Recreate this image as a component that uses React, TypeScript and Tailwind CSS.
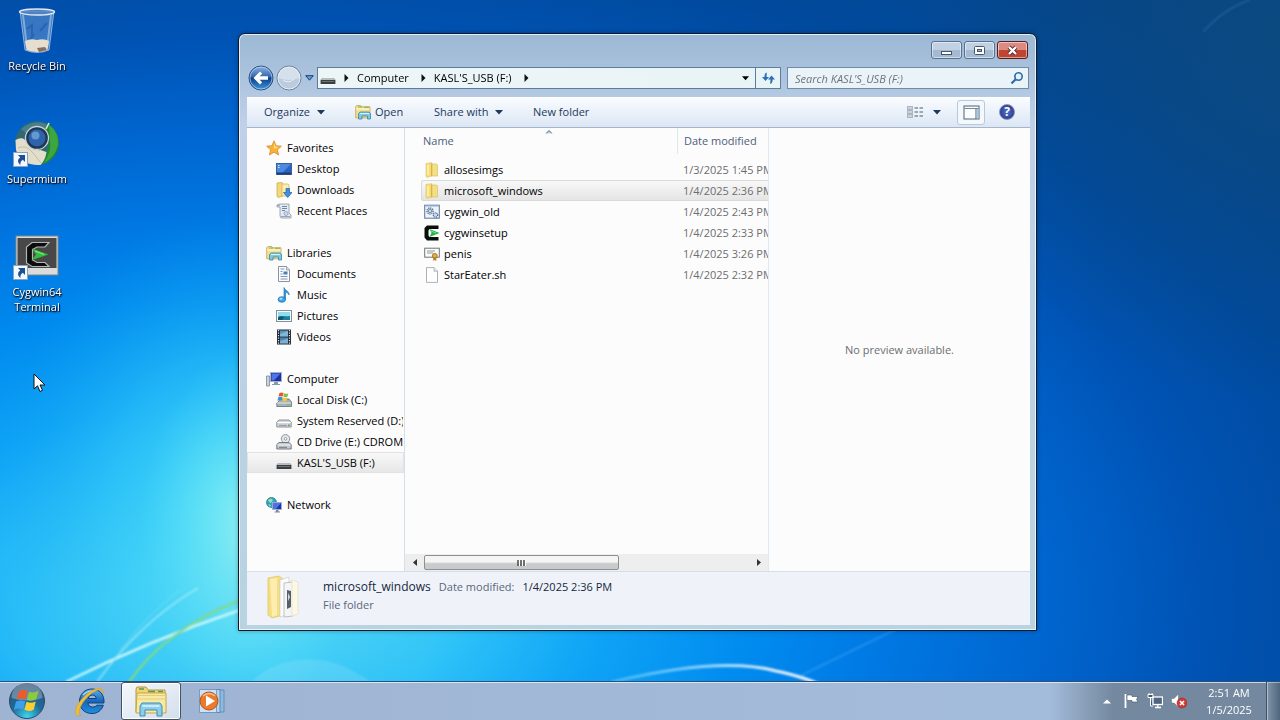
import type { ReactNode } from 'react';

function Svg({ size = 16, className = '', children }: { size?: number; className?: string; children: ReactNode }) {
  return (
    <svg width={size} height={size} viewBox={`0 0 ${size} ${size}`} className={`shrink-0 ${className}`} aria-hidden="true">
      {children}
    </svg>
  );
}

/* ---------- small icons ---------- */

const StarIcon = () => (
  <Svg>
    <path d="M8 .8l2.100 4.900 5.300.5-4 3.600 1.200 5.200L8 12.200 3.400 15l1.200-5.200-4-3.600 5.300-.5z" fill="#f9b233" stroke="#d98a2c" strokeWidth=".8" />
    <path d="M8 3l1.200 3.500 3.400.4L8 9z" fill="#fde08a" />
  </Svg>
);
const DesktopIcon = () => (
  <Svg>
    <rect x=".5" y="2.500" width="15" height="11" fill="#2b62c0" stroke="#3a5f96" />
    <path d="M1 3h14L6 12H1z" fill="#4a8ae0" />
    <path d="M1 11.500h14v2H1z" fill="#1c3a78" />
    <path d="M2 4.500h1.500M2 6.500h1.500" stroke="#cfe4ff" />
  </Svg>
);
const DownloadsIcon = () => (
  <Svg>
    <path d="M1 1l5-.5 1 1.500V14l-5 1.500L1 14z" fill="#f3d878" stroke="#c9a542" strokeWidth=".7" />
    <path d="M6 2h6l1 1v11H6z" fill="#fbeeb0" stroke="#cfae50" strokeWidth=".7" />
    <path d="M10 6.500h3.500v4H16L11.700 15.500 7.500 10.500H10z" fill="#3f8fe0" stroke="#1e5fae" strokeWidth=".7" />
  </Svg>
);
const RecentIcon = () => (
  <Svg>
    <path d="M3 1h10v9l2 2v3H5l-1-2V4H1V2z" fill="#e6eaf0" stroke="#8a94a3" strokeWidth=".8" />
    <path d="M6 3.500h5M6 5.500h5M6 7.500h3" stroke="#6d86ac" />
    <path d="M1 2.500h3M5 13.500h9" stroke="#9aa5b5" />
    <circle cx="10" cy="10.500" r="2" fill="#cddcee" stroke="#7f93b0" strokeWidth=".7" />
  </Svg>
);
const LibraryIcon = () => (
  <Svg>
    <path d="M.7 2.500l1-1h4l1 1.300H15v11H.7z" fill="#f4df8d" stroke="#c5a44c" strokeWidth=".8" />
    <path d="M1.200 5h13.300" stroke="#fdf6cc" strokeWidth="1.400" />
    <path d="M3 3h4M9 3.200h5" stroke="#7db05a" />
    <path d="M3.500 15V9.500l1.500-1.500h9l1.500 1.500V15h-3v-3H7v3z" fill="#7fc9e0" stroke="#3b87a8" strokeWidth=".8" />
    <path d="M5 9.500h9" stroke="#d4f3fa" />
  </Svg>
);
const DocumentIcon = () => (
  <Svg>
    <path d="M2.500.5h8L13.500 4v11.500h-11z" fill="#fafcff" stroke="#7d8794" strokeWidth=".9" />
    <path d="M10.500.5V4h3" fill="#d7dee8" stroke="#7d8794" strokeWidth=".7" />
    <path d="M4.500 3h4M4.500 5.500h2M4.500 8h2M4.500 10.500h7M4.500 13h7" stroke="#7e94b5" />
    <rect x="7.500" y="5.500" width="4" height="3" fill="#4a7fae" />
  </Svg>
);
const MusicIcon = () => (
  <Svg>
    <path d="M8 .5c1 3 5.500 3.500 5 7.500-.3-1.500-1.500-2.500-3.500-3v7.500H8z" fill="#2f9be0" stroke="#1b6cab" strokeWidth=".6" />
    <ellipse cx="5.800" cy="12.500" rx="3.700" ry="2.800" fill="#3aa6e8" stroke="#1b6cab" strokeWidth=".7" />
    <ellipse cx="5" cy="11.800" rx="1.500" ry="1" fill="#b6e2fa" />
  </Svg>
);
const PictureIcon = () => (
  <Svg>
    <rect x=".5" y="2.500" width="15" height="11" fill="#fff" stroke="#80919d" />
    <rect x="2" y="4" width="12" height="8" fill="#8fdcea" />
    <path d="M2 9c3-2 6 0 12-1v4H2z" fill="#1d7f9c" />
    <path d="M2 9.500c2-1.500 4-1 6 0l-2 2.500H2z" fill="#14566f" />
  </Svg>
);
const VideoIcon = () => (
  <Svg>
    <rect x="1" y=".5" width="14" height="15" fill="#1e2935" />
    <rect x="4" y="1.500" width="8" height="6" fill="#5a93bd" />
    <rect x="4" y="8.500" width="8" height="6" fill="#4c86b0" />
    <path d="M4 5l8-3v5.500H4zM4 12l8-2.500v5H4z" fill="#9fcbe4" opacity=".6" />
    <path d="M2.500 1v14M13.500 1v14" stroke="#dde6ec" strokeWidth="1.200" strokeDasharray="1.300 1.200" />
  </Svg>
);
const ComputerIcon = () => (
  <Svg>
    <path d="M.5 5h3v10h-3z" fill="#c9d3de" stroke="#7b8795" strokeWidth=".8" />
    <rect x="4.500" y="1.500" width="11" height="9" fill="#1c2fb0" stroke="#a6b3c4" />
    <path d="M5.500 2.500h9L8 9.500H5.500z" fill="#4f74e4" />
    <path d="M8 11h4v2h2v1H6v-1h2z" fill="#8b98a8" />
  </Svg>
);
const LocalDiskIcon = () => (
  <Svg>
    <path d="M3 9l1-2h9l2.500 3v4.500H.8V11z" fill="#a8b0b8" stroke="#636c76" strokeWidth=".8" />
    <path d="M1 11h14" stroke="#e3e8ec" />
    <rect x="11" y="12" width="3" height="1.200" fill="#5ed04c" />
    <path d="M3.500 1c1.500-1 3-.6 4 0L6.800 4.500C5.500 4 4.100 4 2.500 4.600z" fill="#e8552a" />
    <path d="M8 1.300c1.500.8 2.700.7 4.300 0l-.9 3.500c-1.200.6-2.700.6-4 0z" fill="#7cc142" />
    <path d="M2.300 5.200c1.300-.7 2.800-.6 4.200 0L5.600 8.700c-1.300-.6-2.700-.6-4.200 0z" fill="#3d8fe0" />
    <path d="M7.100 5.500c1.400.6 2.700.6 4.100 0l-.8 3.500c-1.200.6-2.800.6-4.100 0z" fill="#f8c62d" />
  </Svg>
);
const DriveIcon = () => (
  <Svg>
    <path d="M.8 9L3 7h10l2.200 2v5H.8z" fill="#d4d7da" stroke="#85898e" strokeWidth=".9" />
    <path d="M1.500 9.500h13" stroke="#fff" />
    <path d="M3 12.300h8" stroke="#8e9499" />
    <rect x="12.200" y="11.500" width="1.500" height="1.500" fill="#4b9f42" />
  </Svg>
);
const CdDriveIcon = () => (
  <Svg>
    <circle cx="9.500" cy="4.800" r="4.200" fill="#e5e9ec" stroke="#82888e" strokeWidth=".9" />
    <circle cx="9.500" cy="4.800" r="1.300" fill="#fff" stroke="#777e85" strokeWidth=".7" />
    <path d="M.8 10.500L3 8.500h10l2.200 2V15H.8z" fill="#c4c9ce" stroke="#6b7279" strokeWidth=".9" />
    <path d="M1.500 11h13" stroke="#f4f6f7" />
    <path d="M3 13.300h8" stroke="#737b82" />
  </Svg>
);
const UsbIcon = () => (
  <Svg>
    <path d="M.6 10L2.500 8h11l1.900 2v4H.6z" fill="#3c3f42" />
    <path d="M.6 10L2.500 8h11l1.900 2z" fill="#b9bdc1" />
    <path d="M2 11.500h12" stroke="#6e7276" />
  </Svg>
);
const NetworkIcon = () => (
  <Svg>
    <circle cx="5.500" cy="5.500" r="5" fill="#2fa1c8" stroke="#1c6f96" strokeWidth=".7" />
    <path d="M2 3c2-2 4-1 5 0L5 6 3 5zM2 7l3 1-1 2z" fill="#9be0a0" />
    <rect x="6.500" y="5.500" width="9" height="7" fill="#1b32b4" stroke="#a3b1c5" strokeWidth=".9" />
    <path d="M7 6h8l-5 6H7z" fill="#4c72e4" />
    <path d="M10 13h2.500v1.500H14v1H8.500v-1H10z" fill="#7c8998" />
  </Svg>
);
const FolderIcon = () => (
  <Svg>
    <path d="M2 1.500L8 .7v13L3 15.500 2 14.500z" fill="#f5dc74" stroke="#dcbf5c" strokeWidth=".6" />
    <path d="M8 2h4.500l1 1v11L8 14z" fill="#f4df85" stroke="#d7b95a" strokeWidth=".6" />
    <path d="M7.500 1.500v13" stroke="#d2ad42" strokeWidth=".8" />
    <path d="M4 3v10" stroke="#fdf3b8" strokeWidth="1.500" />
  </Svg>
);
const BatchIcon = () => (
  <Svg>
    <rect x=".7" y="1.200" width="14.600" height="13" fill="#eef3f9" stroke="#5d779c" />
    <path d="M1 2h14" stroke="#8db0dc" />
    <circle cx="6" cy="7" r="3" fill="none" stroke="#5a7390" strokeWidth="1.500" strokeDasharray="1.200 .8" />
    <circle cx="6" cy="7" r="1.700" fill="#c9dcee" stroke="#56708c" strokeWidth=".7" />
    <circle cx="11.500" cy="11" r="2.200" fill="#c9dcee" stroke="#48648a" strokeWidth="1.300" strokeDasharray="1 .7" />
  </Svg>
);
const CygwinIcon = () => (
  <Svg>
    <path d="M14.500.5H3L.5 3v9.500L3 15.500h11.500V12H5.500l-1-1.500v-5L5.500 4h9z" fill="#0b0f0c" />
    <path d="M5.500 4l10 4-10 4L7.500 8z" fill="#27b04a" />
    <path d="M7 6l5 2" stroke="#9df0a9" strokeWidth=".7" />
  </Svg>
);
const CertificateIcon = () => (
  <Svg>
    <rect x=".7" y="2.200" width="14.600" height="9" fill="#fdfdf8" stroke="#6f737b" />
    <path d="M3 5h8M3 7h6" stroke="#8c97ad" />
    <circle cx="10.800" cy="9.800" r="2.400" fill="#e2b13b" stroke="#8f651b" strokeWidth=".8" />
    <path d="M9.300 11.500V15l1.500-1 1.500 1v-3.500z" fill="#b97f22" />
  </Svg>
);
const BlankFileIcon = () => (
  <Svg>
    <path d="M2.500.6h7.500l3.500 3.600v11.200h-11z" fill="#fff" stroke="#a1a9ae" strokeWidth=".9" />
    <path d="M10 .6v3.600h3.500" fill="#e8eded" stroke="#a1a9ae" strokeWidth=".8" />
  </Svg>
);
const Caret = ({ className = '' }: { className?: string }) => (
  <svg width="8" height="5" viewBox="0 0 8 5" className={`shrink-0 ${className}`} aria-hidden="true">
    <path d="M0 0h8L4 4.500z" fill="currentColor" />
  </svg>
);
const Chevron = () => (
  <svg width="5" height="8" viewBox="0 0 5 8" className="shrink-0" aria-hidden="true">
    <path d="M.5 0L4.500 4 .5 8z" fill="#111" />
  </svg>
);

/* ---------- wallpaper ---------- */

function Wallpaper() {
  return (
    <svg className="absolute inset-0 h-full w-full" viewBox="0 0 1280 720" preserveAspectRatio="none" aria-hidden="true">
      <defs>
        <radialGradient id="sky" gradientUnits="userSpaceOnUse" cx="0" cy="0" r="1" gradientTransform="translate(250 600) scale(1400 827)">
          <stop offset="0" stopColor="#74e2f0" />
          <stop offset=".08" stopColor="#50d8f6" />
          <stop offset=".16" stopColor="#2bc0f8" />
          <stop offset=".25" stopColor="#0fa4f6" />
          <stop offset=".36" stopColor="#008bef" />
          <stop offset=".46" stopColor="#0077e2" />
          <stop offset=".57" stopColor="#0065cf" />
          <stop offset=".68" stopColor="#0053b4" />
          <stop offset=".8" stopColor="#004a9e" />
          <stop offset="1" stopColor="#064688" />
        </radialGradient>
        <radialGradient id="halo" gradientUnits="userSpaceOnUse" cx="0" cy="0" r="1" gradientTransform="translate(230 500) scale(230 290)">
          <stop offset="0" stopColor="#52e0f6" stopOpacity=".85" />
          <stop offset=".5" stopColor="#32c8f8" stopOpacity=".5" />
          <stop offset="1" stopColor="#10a0f0" stopOpacity="0" />
        </radialGradient>
        <radialGradient id="glow" gradientUnits="userSpaceOnUse" cx="0" cy="0" r="1" gradientTransform="translate(250 530) scale(110 180)">
          <stop offset="0" stopColor="#a5f5f0" stopOpacity=".75" />
          <stop offset="1" stopColor="#5be4fa" stopOpacity="0" />
        </radialGradient>
        <radialGradient id="corner" gradientUnits="userSpaceOnUse" cx="1280" cy="40" r="360">
          <stop offset="0" stopColor="#0c4a80" stopOpacity=".85" />
          <stop offset="1" stopColor="#0a4478" stopOpacity="0" />
        </radialGradient>
        <linearGradient id="arc" x1="0" x2="1" y1="0" y2="0">
          <stop offset="0" stopColor="#8fe0ff" stopOpacity=".4" />
          <stop offset=".7" stopColor="#fff" stopOpacity=".85" />
          <stop offset="1" stopColor="#fff" />
        </linearGradient>
        <filter id="soft" x="-20%" y="-20%" width="140%" height="140%">
          <feGaussianBlur stdDeviation="1" />
        </filter>
      </defs>
      <rect width="1280" height="720" fill="url(#sky)" />
      <rect width="1280" height="720" fill="url(#halo)" />
      <rect width="1280" height="720" fill="url(#glow)" />
      <rect width="1280" height="720" fill="url(#corner)" />
      <g fill="none" filter="url(#soft)">
        <path d="M245 690c20-30 70-42 110-18l30 18z" fill="#fff" opacity=".12" />
        <path d="M66 682Q150 640 240 610" stroke="#c9f7fb" strokeWidth="2.500" />
        <path d="M97 682Q140 622 198 588" stroke="#a5ecf7" strokeWidth="1.500" opacity=".8" />
        <path d="M120 650Q150 612 180 590" stroke="#7fe0f5" strokeWidth="1" opacity=".8" />
        <path d="M129 682Q165 630 240 600" stroke="#84d982" strokeWidth="2.200" />
        <path d="M612 682Q720 656 776 671Q810 678 830 690" stroke="url(#arc)" strokeWidth="3" />
        <path d="M800 676L915 620" stroke="#4fb5ff" strokeWidth="2" opacity=".35" />
        <path d="M1203 32Q1225 8 1250 0" stroke="#5c9ccb" strokeWidth="1.500" opacity=".3" />
      </g>
    </svg>
  );
}

/* ---------- desktop ---------- */

const ShortcutBadge = ({ y }: { y: number }) => (
  <g transform={`translate(0 ${y})`}>
    <rect x=".5" y=".5" width="14" height="14" fill="#f4f9ff" stroke="#8aa4be" />
    <path d="M5 3h7v7L9.800 7.800C8 9 7 10.500 7.500 13 4.200 10.500 4.500 7.500 7.200 5.200z" fill="#1d4f94" />
  </g>
);
const RecycleBin = () => (
  <svg width="48" height="48" viewBox="0 0 48 48" aria-hidden="true">
    <path d="M7 4h34l-5 39q-12 5-24 0z" fill="#7ba5da" fillOpacity=".45" stroke="#b9d4f0" strokeOpacity=".7" />
    <path d="M10 8l4 33M38 8l-4 33" stroke="#dcecfb" strokeOpacity=".45" strokeWidth="2" />
    <path d="M14 22l5-4v12M27 24l7-8M17 33l4-6" stroke="#1e56a8" strokeOpacity=".55" strokeWidth="2" fill="none" />
    <path d="M12 34q6-3 12-1 7-2 12 1l-1.500 9q-10 4-21 0z" fill="#e6dfd0" />
    <path d="M24 41l8-1 2 3-8 2z" fill="#86705c" />
    <ellipse cx="24" cy="5" rx="17.500" ry="3" fill="#5b87c0" fillOpacity=".7" stroke="#dde8f4" strokeWidth="1.400" />
  </svg>
);
const Supermium = () => (
  <svg width="48" height="48" viewBox="0 0 48 48" aria-hidden="true">
    <circle cx="24" cy="23" r="22" fill="#2f6874" />
    <path d="M8 9q14-12 29-3l-6 7q-9-7-17 1z" fill="#5f98a4" opacity=".5" />
    <path d="M34 3.500a22 22 0 0 1-6 41q6-7 6-15 5-9-1-18z" fill="#23872d" />
    <path d="M36 5q10 7 9 20-3 12-14 18 8-12 6-22z" fill="#49b84c" opacity=".65" />
    <path d="M2.500 20q8-5 13 4 6 7 12 6l6 2q-1 8-6 13Q8 46 3 30z" fill="#e3ddcc" />
    <path d="M5 28q8-4 15 5t9 11" stroke="#c6bda8" strokeWidth="1" fill="none" />
    <circle cx="24" cy="18" r="11.500" fill="#1f3850" stroke="#c9d2d8" strokeWidth="1.300" />
    <circle cx="24" cy="18" r="8.500" fill="#2e63ac" />
    <circle cx="22.500" cy="15.500" r="4" fill="#77a9de" opacity=".75" />
    <path d="M33 9l3-6" stroke="#e9e7d5" strokeWidth="1.500" />
    <ShortcutBadge y={32} />
  </svg>
);
const CygwinTerminal = () => (
  <svg width="48" height="48" viewBox="0 0 48 48" aria-hidden="true">
    <rect x="3" y="3" width="42" height="39" fill="#d9dcda" stroke="#7e8484" />
    <rect x="4.500" y="5" width="39" height="30" fill="#484848" />
    <path d="M36 9.500H19l-5.500 4.500v16l5.500 3.500h17L32 29.500h-8l-4.500-2.500V16.500L24 14h8z" fill="#0b0c0b" stroke="#b4b6b4" strokeWidth="1.200" />
    <path d="M19 15.500l16.500 6L19 27l4-5.500z" fill="#30be3b" />
    <path d="M22 18l9 3.500" stroke="#8cf08f" strokeWidth="1" />
    <ShortcutBadge y={32} />
  </svg>
);

function DesktopShortcut({ icon, label }: { icon: ReactNode; label: string }) {
  return (
    <button className="flex h-[113px] w-full flex-col items-center text-[11px] leading-[15px] text-white [text-shadow:0_1px_2px_#000,1px_1px_1px_#001a40]">
      {icon}
      <span className="mt-[3px] block w-16">{label}</span>
    </button>
  );
}

/* ---------- explorer window ---------- */

type Item = { label: string; icon: ReactNode; selected?: boolean };
const groups: { title: string; icon: ReactNode; items: Item[] }[] = [
  {
    title: 'Favorites',
    icon: <StarIcon />,
    items: [
      { label: 'Desktop', icon: <DesktopIcon /> },
      { label: 'Downloads', icon: <DownloadsIcon /> },
      { label: 'Recent Places', icon: <RecentIcon /> },
    ],
  },
  {
    title: 'Libraries',
    icon: <LibraryIcon />,
    items: [
      { label: 'Documents', icon: <DocumentIcon /> },
      { label: 'Music', icon: <MusicIcon /> },
      { label: 'Pictures', icon: <PictureIcon /> },
      { label: 'Videos', icon: <VideoIcon /> },
    ],
  },
  {
    title: 'Computer',
    icon: <ComputerIcon />,
    items: [
      { label: 'Local Disk (C:)', icon: <LocalDiskIcon /> },
      { label: 'System Reserved (D:)', icon: <DriveIcon /> },
      { label: 'CD Drive (E:) CDROM', icon: <CdDriveIcon /> },
      { label: "KASL'S_USB (F:)", icon: <UsbIcon />, selected: true },
    ],
  },
  { title: 'Network', icon: <NetworkIcon />, items: [] },
];

const files = [
  { name: 'allosesimgs', date: '1/3/2025 1:45 PM', icon: <FolderIcon /> },
  { name: 'microsoft_windows', date: '1/4/2025 2:36 PM', icon: <FolderIcon />, selected: true },
  { name: 'cygwin_old', date: '1/4/2025 2:43 PM', icon: <BatchIcon /> },
  { name: 'cygwinsetup', date: '1/4/2025 2:33 PM', icon: <CygwinIcon /> },
  { name: 'penis', date: '1/4/2025 3:26 PM', icon: <CertificateIcon /> },
  { name: 'StarEater.sh', date: '1/4/2025 2:32 PM', icon: <BlankFileIcon /> },
];

function TitleBar() {
  const base = 'flex h-[18px] w-[31px] items-center justify-center rounded-[3px] border shadow-[inset_0_0_0_1px_rgba(255,255,255,0.5)]';
  return (
    <header className="flex h-[33px] shrink-0 items-start justify-end gap-0.5 pt-[7px] pr-0.5">
      <button aria-label="Minimize" className={`${base} border-[#5b708f] bg-linear-to-b from-[#c0d1e4] from-50% to-[#a3bad2] to-50%`}>
        <svg width="13" height="11" viewBox="0 0 13 11" className="mt-px" aria-hidden="true"><rect x="1.500" y="6.500" width="10" height="3" fill="#fff" stroke="#475468" /></svg>
      </button>
      <button aria-label="Maximize" className={`${base} border-[#5b708f] bg-linear-to-b from-[#c0d1e4] from-50% to-[#a3bad2] to-50%`}>
        <svg width="13" height="11" viewBox="0 0 13 11" aria-hidden="true"><rect x="1.500" y="1.500" width="10" height="8" rx="1" fill="#fff" stroke="#475468" /><rect x="4.500" y="4.500" width="4" height="2" fill="#9fb6d0" stroke="#475468" /></svg>
      </button>
      <button aria-label="Close" className={`${base} border-[#5c1a1a] bg-linear-to-b from-[#dd8a80] from-50% to-[#bf4533] to-50%`}>
        <svg width="13" height="11" viewBox="0 0 13 11" aria-hidden="true"><path d="M3 2l7 7M10 2L3 9" stroke="#5d2a28" strokeWidth="4" /><path d="M3 2l7 7M10 2L3 9" stroke="#fff" strokeWidth="2.400" /></svg>
      </button>
    </header>
  );
}

function NavBar() {
  return (
    <nav className="flex h-[22px] shrink-0 items-center pr-px" aria-label="Location">
      <button aria-label="Back" className="ml-px size-[26px]">
        <svg width="26" height="26" viewBox="0 0 26 26" aria-hidden="true">
          <defs>
            <linearGradient id="back" x1="0" x2="0" y1="0" y2="1">
              <stop offset="0" stopColor="#8fb5e0" /><stop offset=".45" stopColor="#3468b0" /><stop offset=".5" stopColor="#0d3c88" /><stop offset="1" stopColor="#3f9be0" />
            </linearGradient>
          </defs>
          <circle cx="13" cy="13" r="12" fill="url(#back)" stroke="#2c4e80" />
          <circle cx="13" cy="13" r="11" fill="none" stroke="#cfe2f5" strokeOpacity=".6" />
          <path d="M5.500 13l6.500-6.500 2.200 2.200-2.600 2.600H20v3.400h-8.400l2.600 2.600L12 19.500z" fill="#fff" />
        </svg>
      </button>
      <button aria-label="Forward" className="ml-[2px] size-[26px]">
        <svg width="26" height="26" viewBox="0 0 26 26" aria-hidden="true">
          <circle cx="13" cy="13" r="12" fill="#bccbdd" stroke="#6b809b" />
          <path d="M2 13a11 11 0 0 1 22 0q-11 4-22 0z" fill="#d5e0ed" />
          <circle cx="13" cy="13" r="11" fill="none" stroke="#f2f7fc" strokeOpacity=".7" />
          <path d="M7 15q6 4 11-1" fill="none" stroke="#e6eef6" />
        </svg>
      </button>
      <button aria-label="Recent locations" className="ml-0.5 flex h-5 w-[11px] items-center justify-center">
        <svg width="9" height="6" viewBox="0 0 9 6" aria-hidden="true"><path d="M.7.700h7.600L4.500 5.200z" fill="#5fa0da" stroke="#173f75" /></svg>
      </button>
      <div className="ml-0.5 flex h-[22px] min-w-0 flex-1 items-stretch border border-[#5c7d9f] bg-linear-to-r from-[#edf6f7] to-[#e9f4f7] text-black">
        <div className="flex min-w-0 flex-1 items-center pl-0.5">
          <UsbIcon />
          <button className="ml-2 flex items-center gap-2"><Chevron />Computer</button>
          <button className="ml-3 flex items-center gap-2"><Chevron />KASL'S_USB (F:)</button>
          <button aria-label="Show subfolders" className="ml-3"><Chevron /></button>
          <button aria-label="Previous locations" className="mr-1.5 ml-auto"><Caret className="w-[7px]" /></button>
        </div>
        <button aria-label="Refresh" className="flex w-[25px] items-center justify-center border-l border-[#5c7d9f]">
          <svg width="15" height="14" viewBox="0 0 15 14" aria-hidden="true">
            <path d="M6 1.500Q3.500 2 3.500 4.500V6H1l3.500 4L8 6H5.600V4.500Q5.600 3 6 1.500z" fill="#2d6fb4" />
            <path d="M9 13q2.500-.5 2.500-3V8.500H14l-3.500-4L7 8.500h2.400V10q0 1.500-.4 3z" fill="#2d6fb4" />
          </svg>
        </button>
      </div>
      <label className="ml-1.5 flex h-[22px] w-[242px] items-center border border-[#6d8dab] bg-[#eaf4f8] pr-1 pl-[7px]">
        <input type="search" aria-label="Search" placeholder="Search KASL'S_USB (F:)" className="h-5 min-w-0 flex-1 bg-transparent italic outline-none placeholder:text-[#6f7377]" />
        <Svg size={14}>
          <circle cx="8.500" cy="5.500" r="3.700" fill="#e5f2fb" stroke="#2e6ba6" strokeWidth="1.600" />
          <path d="M5.700 8.300L1.500 12.500" stroke="#2e6ba6" strokeWidth="2.200" />
        </Svg>
      </label>
    </nav>
  );
}

function Toolbar() {
  return (
    <div className="mt-2 flex h-[30px] shrink-0 items-center border-t border-white bg-linear-to-b from-[#fafcff] via-[#eaf1fa] to-[#dce6f4] pb-px pl-[17px] text-[#1e395b]" role="toolbar">
      <button className="flex w-[61px] items-center justify-between">Organize<Caret /></button>
      <button className="ml-[30px] flex w-[50px] items-center gap-1"><LibraryIcon />Open</button>
      <button className="ml-[29px] flex w-[69px] items-center justify-between">Share with<Caret /></button>
      <button className="ml-[30px]">New folder</button>
      <button aria-label="Change your view" className="ml-auto flex items-center gap-2.5">
        <Svg>
          <path d="M.5 2.500h5v3h-5zM.5 6.500h5v3h-5zM.5 10.500h5v3h-5z" fill="#c8d2de" stroke="#7a8797" strokeDasharray="1 1" />
          <path d="M7.500 4h3.500M12.500 4H16M7.500 8h3.500M12.500 8H16M7.500 12h3.500M12.500 12H16" stroke="#4d5c6e" />
        </Svg>
        <Caret />
      </button>
      <button aria-label="Hide the preview pane" className="ml-4 flex h-[25px] w-[28px] items-center justify-center rounded-[3px] border border-[#b9c8dc] bg-[#f3f8fd]">
        <Svg size={17}>
          <rect x="1" y="2" width="15" height="13" fill="#fbfdff" stroke="#4c6178" />
          <path d="M1.500 4.500h14" stroke="#74889e" />
          <path d="M13 5v10" stroke="#4c6178" /><path d="M14.500 5v9.500" stroke="#a7cce8" strokeWidth="1.500" />
        </Svg>
      </button>
      <button aria-label="Get help" className="mr-[15px] ml-[14px] flex size-4 items-center justify-center rounded-full border border-[#8791ba] bg-radial from-[#5575cf] to-[#202a7b] text-[12px] leading-3 font-bold text-white">?</button>
    </div>
  );
}

function NavigationPane() {
  return (
    <aside className="flex w-[158px] shrink-0 flex-col gap-[21px] overflow-hidden border-r border-[#d6e0ec] pt-[9px] text-black">
      {groups.map((group) => (
        <section key={group.title}>
          <a href="#" className="flex h-[21px] items-center gap-[5px] pl-[19px]">{group.icon}{group.title}</a>
          {group.items.map((item) => (
            <a
              key={item.label}
              href="#"
              className={`flex h-[21px] items-center gap-[5px] overflow-hidden pl-[28px] whitespace-nowrap ${item.selected ? 'border border-[#e2e2e2] bg-linear-to-b from-[#f8f8f8] to-[#e7e7e8]' : 'border border-transparent'}`}
            >
              {item.icon}
              {item.label}
            </a>
          ))}
        </section>
      ))}
    </aside>
  );
}

function FileList() {
  return (
    <section className="flex min-w-0 flex-1 flex-col border-r border-[#dfe7f0]">
      <div className="min-h-0 flex-1 overflow-hidden pl-4">
        <table className="w-[460px] table-fixed border-separate border-spacing-0 text-left whitespace-nowrap">
          <thead className="text-[#4c607a]">
            <tr className="h-[26px]">
              <th scope="col" className="relative w-[257px] border-r border-[#dfe6ee] pl-0.5 font-normal">
                Name
                <svg width="7" height="4" viewBox="0 0 7 4" className="absolute top-0.5 left-1/2 -translate-x-1/2" aria-hidden="true"><path d="M.5 3.500l3-3 3 3" fill="#b9d8ea" stroke="#486b86" /></svg>
              </th>
              <th scope="col" className="pl-[6px] font-normal">Date modified</th>
            </tr>
            <tr aria-hidden="true" className="h-[5px]"><td colSpan={2} /></tr>
          </thead>
          <tbody>
            {files.map((file) => (
              <tr key={file.name} className={file.selected ? 'bg-linear-to-b from-[#f9f9f9] to-[#e4e4e5]' : ''}>
                <td className={`h-[21px] rounded-l-[3px] border border-r-0 pl-[2px] text-black ${file.selected ? 'border-[#d9d9d9]' : 'border-transparent'}`}>
                  <span className="flex items-center gap-1">{file.icon}{file.name}</span>
                </td>
                <td className={`border-y pl-[5px] text-[#6d6d6d] ${file.selected ? 'border-[#d9d9d9]' : 'border-transparent'}`}>{file.date}</td>
              </tr>
            ))}
          </tbody>
        </table>
      </div>
      <div className="flex h-[17px] shrink-0 items-center bg-[#eeeeef]">
        <button aria-label="Scroll left" className="flex h-full w-[19px] items-center justify-center">
          <svg width="4" height="7" viewBox="0 0 4 7" aria-hidden="true"><path d="M4 0v7L0 3.500z" fill="#333" /></svg>
        </button>
        <div className="flex h-full min-w-0 flex-1 items-center">
          <div className="flex h-[15px] w-[60%] items-center justify-center gap-px rounded-[2px] border border-[#8f8f8f] bg-linear-to-b from-[#f5f5f5] from-45% to-[#c9cacc] to-60%">
            <svg width="9" height="6" viewBox="0 0 9 6" aria-hidden="true"><path d="M1 0v6M4 0v6M7 0v6" stroke="#4c4c4c" strokeWidth="1.500" /><path d="M2.500 0v6M5.500 0v6M8.500 0v6" stroke="#fff" /></svg>
          </div>
        </div>
        <button aria-label="Scroll right" className="flex h-full w-[19px] items-center justify-center">
          <svg width="4" height="7" viewBox="0 0 4 7" aria-hidden="true"><path d="M0 0v7l4-3.500z" fill="#333" /></svg>
        </button>
      </div>
    </section>
  );
}

function DetailsPane() {
  return (
    <footer className="flex h-[54px] shrink-0 gap-4 border-t border-[#d3dfec] bg-[#eff3f9] pl-[17px]">
      <svg width="43" height="48" viewBox="0 0 43 48" className="shrink-0" aria-hidden="true">
        <path d="M4 6l11-2 4 3v36l-11 3-4-3z" fill="#f5dd80" stroke="#e0c76d" strokeWidth=".8" />
        <path d="M6 7l7-1v37l-5 2z" fill="#fbeeb0" />
        <path d="M16 8l9-3v37l-9 3z" fill="#fcfcfc" stroke="#cdcdcd" strokeWidth=".7" />
        <path d="M20 11l9-1v34l-9 1z" fill="#f4f5f6" stroke="#a8acb0" strokeWidth=".7" />
        <path d="M23 18l4 1v16l-4 2z" fill="#56606a" />
        <path d="M24 21l2 4-2 4z" fill="#d6dee5" />
        <path d="M28 8l6 2v32l-6 2z" fill="#fbf8e8" stroke="#e8dfb8" strokeWidth=".7" />
      </svg>
      <div className="pt-[6px] leading-[18px]">
        <p className="flex items-baseline gap-2 text-[#16263f]">
          <strong className="text-[12px] font-normal">microsoft_windows</strong>
          <span className="text-[#5a6779]">Date modified:</span>
          <span>1/4/2025 2:36 PM</span>
        </p>
        <p className="text-[#5a6779]">File folder</p>
      </div>
    </footer>
  );
}

function ExplorerWindow() {
  return (
    <main className="absolute top-[33px] right-[243px] bottom-[50px] left-[238px] flex min-w-[640px] flex-col rounded-t-[7px] border border-[#0c1b30] bg-linear-to-b from-[#9bb8d4] via-[#bfd0e8] to-[#b9d3e0] pr-1.5 pb-[5px] pl-2 shadow-[inset_0_0_0_1px_rgba(255,255,255,0.75),0_0_4px_rgba(0,0,0,0.3)] via-15%">
      <TitleBar />
      <NavBar />
      <Toolbar />
      <div className="flex min-h-0 flex-1 border-t border-[#a5b5cb] bg-[#fcfcfd]">
        <NavigationPane />
        <FileList />
        <section className="flex w-[261px] shrink-0 items-center justify-center text-[#6d6d6d]">No preview available.</section>
      </div>
      <DetailsPane />
    </main>
  );
}

/* ---------- taskbar ---------- */

function Taskbar() {
  return (
    <footer className="relative flex h-[39px] shrink-0 items-stretch border-t border-[#2c4f7c] bg-linear-to-r from-[#9fb3d2] via-[#a4bcdb] via-82% to-[#74899f] to-87% text-white shadow-[inset_0_1px_0_rgba(255,255,255,0.65)]">
      <button aria-label="Start" className="ml-2 flex w-[38px] items-center justify-center">
        <svg width="38" height="38" viewBox="0 0 38 38" aria-hidden="true">
          <defs>
            <radialGradient id="orb" cx=".5" cy=".95" r=".9">
              <stop offset="0" stopColor="#40d5ee" /><stop offset=".5" stopColor="#1c6a9a" /><stop offset="1" stopColor="#2f5478" />
            </radialGradient>
          </defs>
          <circle cx="19" cy="19" r="17.500" fill="url(#orb)" stroke="#2d4a68" />
          <path d="M3.500 16a15.500 15.500 0 0 1 31 0q-15 5-31 0z" fill="#fff" opacity=".28" />
          <path d="M11 9.500q4-2.500 8.500-.6L17.600 17.200q-4.500-1.700-9.200.4z" fill="#ee5a2c" />
          <path d="M21 9.800q4.500 2 9.500-1L28.300 17.300q-4.800 2.700-9.500.4z" fill="#8ccb3e" />
          <path d="M8 19.500q4.300-2 9.200-.3l-2 8q-4.200-1.700-9.300.6z" fill="#3f9fe8" />
          <path d="M18.500 19.700q4.500 2 9.300-.3l-2.200 8.300q-4.500 2.400-9.200.1z" fill="#fbcf2e" />
        </svg>
      </button>
      <button aria-label="Internet Explorer" className="ml-[15px] flex w-[60px] items-center justify-center">
        <svg width="32" height="32" viewBox="0 0 32 32" className="-ml-0.5" aria-hidden="true">
          <defs>
            <linearGradient id="ie" x1="0" x2="0" y1="0" y2="1">
              <stop offset="0" stopColor="#5cb0ec" /><stop offset=".5" stopColor="#1766b8" /><stop offset="1" stopColor="#1f8fdc" />
            </linearGradient>
          </defs>
          <path d="M18 4c7.500 0 12.500 5.500 12 14H14c.4 2.800 2.200 4 4.700 4 1.900 0 3.300-.6 4-1.800H29.300C27.500 25.500 23.500 28.500 18 28.500 10.500 28.500 5.500 23.500 5.500 16.500S10.500 4 18 4zM14.200 13.500h8.200c-.4-2.200-1.900-3.400-4.100-3.400s-3.700 1.200-4.100 3.400z" fill="url(#ie)" stroke="#0b4180" strokeWidth="1" />
          <path d="M9 10q5-5 12-4" stroke="#a6dafb" strokeWidth="1.300" fill="none" />
          <path d="M29 9c1-4-1.500-6.500-5.500-5.500C13.500 5.500 2.500 18 1.500 26c-.4 4 2.500 5.500 6 4-2 .2-2.800-1-2.500-3.500C6 19.500 15 8.500 22.500 5.500c4-1.500 6-.3 6.500 3.500z" fill="#f2bd35" stroke="#c99a2c" strokeWidth=".5" />
        </svg>
      </button>
      <button aria-label="Windows Explorer" className="flex w-[60px] items-center justify-center rounded-[3px] border border-[#40536b] bg-linear-to-br from-[#f5f8fb] to-[#d3dfec] shadow-[inset_0_0_0_1px_#fff]">
        <svg width="34" height="32" viewBox="0 0 34 32" aria-hidden="true">
          <path d="M2 4l1-2h9l2 3h17v22H2z" fill="#efd576" stroke="#b99743" />
          <path d="M3 8h29v20H2z" fill="#f8e9a3" stroke="#c5a44c" />
          <path d="M5 4h5M14 6.500h7M24 6.500h5" stroke="#609c47" strokeWidth="1.500" />
          <path d="M3.500 10.500h28M3.500 14h28" stroke="#e3cd7a" />
          <path d="M6 31V21l2-3h18l2 3v10h-5v-6H11v6z" fill="#8ccde9" stroke="#3e8db5" />
          <path d="M8.500 21h17" stroke="#dff6fc" strokeWidth="1.500" />
        </svg>
      </button>
      <button aria-label="Windows Media Player" className="flex w-[62px] items-center justify-center">
        <svg width="28" height="28" viewBox="0 0 28 28" aria-hidden="true">
          <path d="M8 3h18v22H8z" fill="#8fb9de" stroke="#5686b5" strokeWidth=".8" />
          <path d="M4 2.500h18v23H4z" fill="#b5d3ec" stroke="#4a7db0" strokeWidth=".8" />
          <path d="M1.500 2.500h17v23h-17z" fill="#cfe2f2" stroke="#6590bb" strokeWidth=".8" />
          <circle cx="11" cy="14" r="9" fill="#ea7a2c" stroke="#b8541a" />
          <path d="M5 9q6-5 12 0" stroke="#f8c294" strokeWidth="1.500" fill="none" />
          <path d="M8 8.500l9 5.500-9 5.500z" fill="#fff" />
        </svg>
      </button>
      <div className="ml-auto flex items-center">
        <button aria-label="Show hidden icons" className="mr-3"><svg width="8" height="5" viewBox="0 0 8 5" aria-hidden="true"><path d="M0 4.500h8L4 .5z" fill="#fff" /></svg></button>
        <button aria-label="Action Center" className="mr-2">
          <Svg><path d="M2.500 1v14" stroke="#fff" strokeWidth="1.800" /><path d="M4 2h5v1.500h6l-1.500 3L15 9H9V7.500H4z" fill="#fff" stroke="#41566e" strokeWidth=".6" /></Svg>
        </button>
        <button aria-label="Network" className="mr-2">
          <Svg><path d="M1 1.500h5v3H1zM2 0v2M5 0v2M3.500 4.500V13H6" fill="#44586e" stroke="#fff" /><rect x="6" y="4" width="9.500" height="7.500" fill="#50657d" stroke="#fff" strokeWidth="1.300" /><path d="M8 14.500h6M10.800 12v2" stroke="#fff" strokeWidth="1.300" /></Svg>
        </button>
        <button aria-label="Volume muted" className="mr-[17px]">
          <Svg><path d="M.5 5.500H3L7.500 1v13L3 10H.5z" fill="#fff" stroke="#5a6c80" strokeWidth=".5" /><circle cx="11" cy="10" r="5" fill="#d33a35" stroke="#8f211e" strokeWidth=".5" /><path d="M9 8l4 4M13 8l-4 4" stroke="#fff" strokeWidth="1.600" /></Svg>
        </button>
        <time className="w-[50px] text-center leading-[17px] whitespace-nowrap">2:51 AM<br />1/5/2025</time>
        <button aria-label="Show desktop" className="ml-3 h-full w-3.5 border-l border-[#3f5265] bg-linear-to-r from-[#8095aa] to-[#50667d] shadow-[inset_1px_1px_0_rgba(255,255,255,0.4)]" />
      </div>
    </footer>
  );
}

export default function App() {
  return (
    <div className="relative flex h-screen min-h-[560px] w-full flex-col overflow-hidden bg-[#0068d0] font-['Open_Sans','Noto_Sans',sans-serif] text-[11px] leading-4">
      <Wallpaper />
      <div className="relative min-h-0 flex-1">
        <div className="flex w-[74px] flex-col pt-[7px]">
          <DesktopShortcut icon={<RecycleBin />} label="Recycle Bin" />
          <DesktopShortcut icon={<Supermium />} label="Supermium" />
          <DesktopShortcut icon={<CygwinTerminal />} label="Cygwin64 Terminal" />
        </div>
        <svg width="13" height="20" viewBox="0 0 13 20" className="absolute top-[373px] left-[33px]" aria-hidden="true">
          <path d="M1 1v15l3.500-3.200L7 18.500l2.500-1.200L7 12h5z" fill="#fff" stroke="#111" />
        </svg>
        <ExplorerWindow />
      </div>
      <Taskbar />
    </div>
  );
}
